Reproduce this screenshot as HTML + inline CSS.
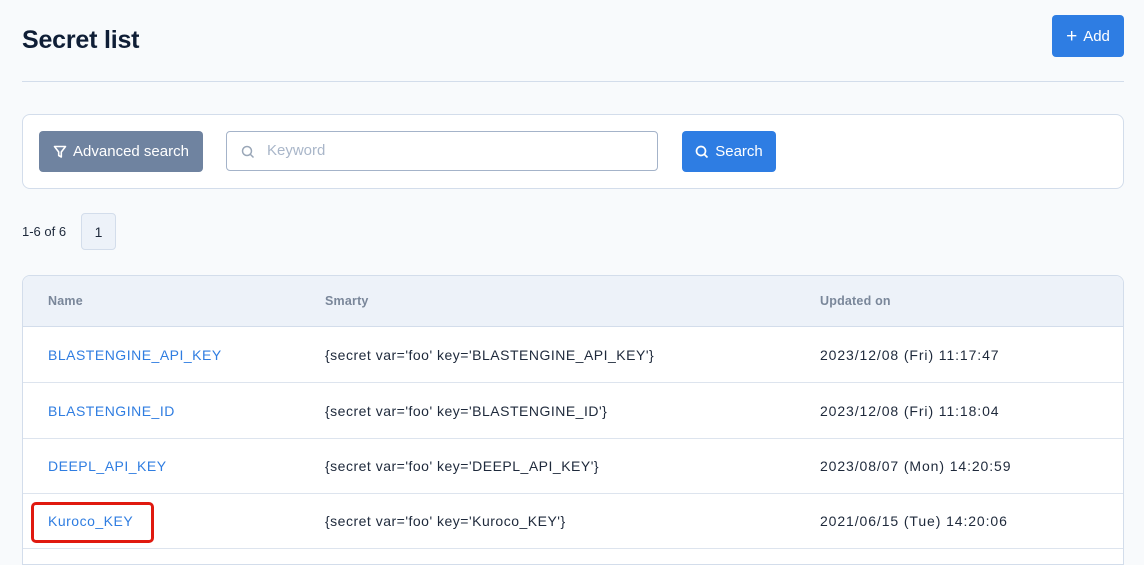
<!DOCTYPE html>
<html><head><meta charset="utf-8"><style>
*{box-sizing:border-box;margin:0;padding:0}
body{width:1144px;height:555px;overflow:hidden;background:#f8fafc;font-family:"Liberation Sans",sans-serif;color:#1e293b;position:relative}
.abs{position:absolute}
h1{position:absolute;left:22px;top:26px;font-size:25px;font-weight:bold;color:#0f1e36;letter-spacing:-0.2px}
.btn{position:absolute;border-radius:4px;color:#fff;font-size:15px;display:flex;align-items:center;justify-content:center;gap:6px}
.card{position:absolute;left:22px;top:114px;width:1102px;height:75px;background:#fff;border:1px solid #d3ddeb;border-radius:8px}
.table{position:absolute;left:22px;top:275px;width:1102px;height:290px;background:#fff;border:1px solid #d3ddeb;border-radius:8px 8px 0 0;overflow:hidden}
.hdr{height:51px;background:#edf2f9;border-bottom:1px solid #d3ddeb;position:relative;font-size:12.5px;font-weight:bold;color:#7a879a;letter-spacing:0.2px}
.row{height:56px;border-bottom:1px solid #dde4ee;position:relative;font-size:14px;letter-spacing:0.5px}
.row:nth-child(4),.row:nth-child(5){height:55px}
.c{position:absolute;top:50%;transform:translateY(-50%);white-space:nowrap}
.c1{left:25px;color:#2f7de1}.c2{left:302px;color:#1e293b}.c3{left:797px;color:#1e293b;letter-spacing:0.9px}
</style></head><body>
<h1>Secret list</h1>
<div class="btn" style="left:1052px;top:15px;width:72px;height:42px;background:#2e7de3"><span style="font-size:19px;line-height:1">+</span>Add</div>
<div class="abs" style="left:22px;top:81px;width:1102px;height:1px;background:#d3ddeb"></div>
<div class="card"></div>
<div class="btn" style="left:39px;top:131px;width:164px;height:41px;background:#6f83a0">
<svg width="14" height="14" viewBox="0 0 14 14" fill="none" stroke="#fff" stroke-width="1.6" stroke-linejoin="round"><path d="M1.5 1.5h11L8.3 7v5L5.7 10.5V7z"/></svg>Advanced search</div>
<div class="abs" style="left:226px;top:131px;width:432px;height:40px;background:#fff;border:1px solid #a4b3c9;border-radius:4px">
<svg class="abs" style="left:14px;top:13px" width="14" height="14" viewBox="0 0 14 14" fill="none" stroke="#9aa7b8" stroke-width="1.5"><circle cx="6" cy="6" r="4.5"/><path d="M9.5 9.5l3 3"/></svg>
<span class="abs" style="left:40px;top:10px;font-size:15px;color:#a9b6c9">Keyword</span></div>
<div class="btn" style="left:682px;top:131px;width:94px;height:41px;background:#2e7de3">
<svg width="14" height="14" viewBox="0 0 14 14" fill="none" stroke="#fff" stroke-width="1.7"><circle cx="6" cy="6" r="4.5"/><path d="M9.5 9.5l3 3"/></svg>Search</div>
<span class="abs" style="left:22px;top:224px;font-size:13px;color:#1e293b">1-6 of 6</span>
<div class="abs" style="left:81px;top:213px;width:35px;height:37px;background:#edf2f9;border:1px solid #d3ddeb;border-radius:4px;font-size:14px;display:flex;align-items:center;justify-content:center">1</div>
<div class="table">
<div class="hdr"><span class="c" style="left:25px">Name</span><span class="c" style="left:302px">Smarty</span><span class="c" style="left:797px">Updated on</span></div>
<div class="row"><span class="c c1">BLASTENGINE_API_KEY</span><span class="c c2">{secret var='foo' key='BLASTENGINE_API_KEY'}</span><span class="c c3">2023/12/08 (Fri) 11:17:47</span></div>
<div class="row"><span class="c c1">BLASTENGINE_ID</span><span class="c c2">{secret var='foo' key='BLASTENGINE_ID'}</span><span class="c c3">2023/12/08 (Fri) 11:18:04</span></div>
<div class="row"><span class="c c1">DEEPL_API_KEY</span><span class="c c2">{secret var='foo' key='DEEPL_API_KEY'}</span><span class="c c3">2023/08/07 (Mon) 14:20:59</span></div>
<div class="row"><span class="c c1">Kuroco_KEY</span><span class="c c2">{secret var='foo' key='Kuroco_KEY'}</span><span class="c c3">2021/06/15 (Tue) 14:20:06</span></div>
</div>
<div class="abs" style="left:31px;top:502px;width:123px;height:41px;border:3px solid #e0190f;border-radius:5px"></div>
</body></html>
